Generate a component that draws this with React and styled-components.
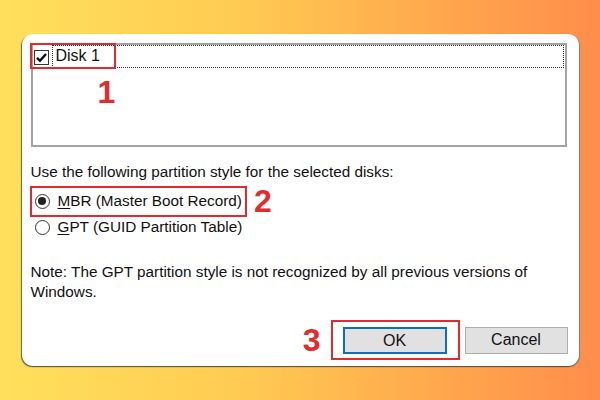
import React from 'react';
import styled, { createGlobalStyle } from 'styled-components';

const GlobalStyle = createGlobalStyle`
  html, body {
    margin: 0;
    padding: 0;
  }
  body {
    font-family: "Liberation Sans", Arial, sans-serif;
  }
`;

const Page = styled.div`
  width: 600px;
  height: 400px;
  display: flex;
  align-items: center;
  justify-content: center;
  background: linear-gradient(90deg, #ffe05c 0%, #ffcb52 40%, #ffab4e 70%, #ff8d4b 100%);
  overflow: hidden;
`;

const Dialog = styled.div`
  width: 557px;
  height: 332px;
  box-sizing: border-box;
  background: #fff;
  border-radius: 11px;
  box-shadow: -1px 1px 1px rgba(60, 60, 60, 0.75), 1px 1px 1px rgba(90, 90, 90, 0.5);
  padding: 9px 11px 6px 9px;
  display: flex;
  flex-direction: column;
  color: #111;
  font-size: 15.3px;
`;

const ListBox = styled.div`
  position: relative;
  width: 536px;
  height: 104px;
  box-sizing: border-box;
  border: 2px solid #a3a3a3;
  padding: 0 1px;
`;

const ItemRow = styled.div`
  display: flex;
  align-items: center;
  height: 24px;
  margin-top: -1px;
`;

const Checkbox = styled.span`
  width: 15px;
  height: 15px;
  box-sizing: border-box;
  border: 1px solid #333;
  display: flex;
  align-items: center;
  justify-content: center;
  flex-shrink: 0;
  margin: 2px 0 0 0;
`;

const FocusLabel = styled.span`
  flex: 1;
  height: 23px;
  box-sizing: border-box;
  border: 1px dotted #333;
  margin-left: 3px;
  padding-left: 3px;
  display: flex;
  align-items: center;
  font-size: 16px;
`;

const Marker = styled.span`
  color: #e52a2e;
  font-weight: bold;
  font-size: 32px;
  line-height: 1;
  font-family: "Liberation Sans", Arial, sans-serif;
`;

const ListMarker = styled(Marker)`
  position: absolute;
  left: 65px;
  top: 31px;
`;

const RedFrame = styled.span`
  position: absolute;
  left: -3px;
  top: -2px;
  width: 86px;
  height: 26px;
  box-sizing: border-box;
  border: 2px solid #e52a2e;
  pointer-events: none;
`;

const Prompt = styled.div`
  margin-top: 15px;
  line-height: 20px;
`;

const OptionLine = styled.div`
  display: flex;
  align-items: center;
  gap: 7px;
  margin-top: 3px;
  margin-left: -1px;
`;

const Highlight = styled.div`
  display: inline-flex;
  align-items: center;
  height: 31px;
  box-sizing: border-box;
  border: 2px solid #e52a2e;
  padding: 0 3px 0 3px;
`;

const RadioRow = styled.label`
  display: flex;
  align-items: center;
  gap: 8px;
  height: 20px;
  line-height: 20px;
  padding-left: ${p => p.$inset || 0}px;
`;

const Radio = styled.span`
  width: 15px;
  height: 15px;
  box-sizing: border-box;
  border-radius: 50%;
  border: 1px solid #333;
  display: flex;
  align-items: center;
  justify-content: center;
  flex-shrink: 0;

  &::after {
    content: '';
    width: 8px;
    height: 8px;
    border-radius: 50%;
    background: #222;
    display: ${p => (p.$checked ? 'block' : 'none')};
  }
`;

const Key = styled.span`
  text-decoration: underline;
  text-underline-offset: 2px;
`;

const Note = styled.p`
  margin: 25px 0 0 0;
  line-height: 20px;
`;

const ButtonBar = styled.div`
  margin-top: auto;
  display: flex;
  align-items: center;
  justify-content: flex-end;
`;

const ButtonFrame = styled.div`
  border: 2px solid #e52a2e;
  padding: 5px 11px 4px 10px;
  margin: 0 5px 0 10px;
  display: flex;
`;

const Button = styled.button`
  width: ${p => p.$width}px;
  height: 27px;
  box-sizing: border-box;
  background: #e1e1e1;
  border: ${p => (p.$primary ? '2px solid #0a6fc2' : '1px solid #adadad')};
  font-family: "Liberation Sans", Arial, sans-serif;
  font-size: 16px;
  color: #111;
  padding: 0;
  margin: 0;
`;

export default function App() {
  return (
    <>
      <GlobalStyle />
      <Page>
        <Dialog>
          <ListBox>
            <ItemRow>
              <Checkbox>
                <svg width="13" height="13" viewBox="0 0 13 13">
                  <path d="M2 6.8 L5 9.8 L11 3" fill="none" stroke="#111" strokeWidth="2.4" />
                </svg>
              </Checkbox>
              <FocusLabel>Disk 1</FocusLabel>
            </ItemRow>
            <RedFrame />
            <ListMarker>1</ListMarker>
          </ListBox>

          <Prompt>Use the following partition style for the selected disks:</Prompt>

          <OptionLine>
            <Highlight>
              <RadioRow>
                <Radio $checked />
                <span><Key>M</Key>BR (Master Boot Record)</span>
              </RadioRow>
            </Highlight>
            <Marker>2</Marker>
          </OptionLine>
          <RadioRow $inset={4}>
            <Radio />
            <span><Key>G</Key>PT (GUID Partition Table)</span>
          </RadioRow>

          <Note>
            Note: The GPT partition style is not recognized by all previous versions of
            <br />
            Windows.
          </Note>

          <ButtonBar>
            <Marker>3</Marker>
            <ButtonFrame>
              <Button $primary $width={104}>OK</Button>
            </ButtonFrame>
            <Button $width={103}>Cancel</Button>
          </ButtonBar>
        </Dialog>
      </Page>
    </>
  );
}
